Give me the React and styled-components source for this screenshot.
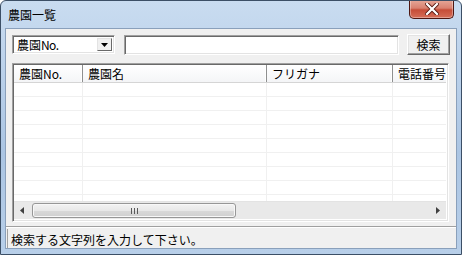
import styled, { createGlobalStyle } from 'styled-components'

const Global = createGlobalStyle`
  html, body { margin: 0; padding: 0; background: #ffffff; }
  body { font-family: "MS UI Gothic", "Noto Sans CJK JP", sans-serif; font-size: 12px; }
`

const columns = [
  { title: '農園No.', width: 69 },
  { title: '農園名', width: 184 },
  { title: 'フリガナ', width: 126 },
  { title: '電話番号', width: 80 }
]

function CloseGlyph () {
  return (
    <svg width='14' height='12' viewBox='0 0 14 12'>
      <path d='M2 1 L12 11 M12 1 L2 11' stroke='#5a1a12' strokeWidth='4' strokeLinecap='square' />
      <path d='M2 1 L12 11 M12 1 L2 11' stroke='#ffffff' strokeWidth='2.2' strokeLinecap='square' />
    </svg>
  )
}

function Arrow ({ dir }) {
  return (
    <svg width='5' height='7' viewBox='0 0 5 7'>
      {dir === 'left'
        ? <path d='M4 0 L0 3.5 L4 7 Z' fill='#404040' />
        : <path d='M1 0 L5 3.5 L1 7 Z' fill='#404040' />}
    </svg>
  )
}

function GripLines () {
  return (
    <svg width='7' height='6' viewBox='0 0 7 6'>
      <path d='M0.5 0 V6 M3.5 0 V6 M6.5 0 V6' stroke='#5a5a5a' strokeWidth='1' />
    </svg>
  )
}

function App () {
  const rows = Array.from({ length: 9 })
  return (
    <>
      <Global />
      <Window>
        <TitleBar>
          <Title>農園一覧</Title>
          <CloseButton><CloseGlyph /></CloseButton>
        </TitleBar>
        <Client>
          <Toolbar>
            <Combo>
              <ComboText>農園<Narrow>No.</Narrow></ComboText>
              <ComboButton>
                <svg width='7' height='4' viewBox='0 0 7 4'><path d='M0 0 H7 L3.5 4 Z' fill='#000' /></svg>
              </ComboButton>
            </Combo>
            <SearchInput />
            <Button>検索</Button>
          </Toolbar>
          <ListView>
            <Header>
              {columns.map(c => (
                <HeaderCell key={c.title} $w={c.width}>{c.title}</HeaderCell>
              ))}
            </Header>
            <Body>
              {rows.map((_, i) => (
                <Row key={i}>
                  {columns.map(c => <Cell key={c.title} $w={c.width} />)}
                </Row>
              ))}
            </Body>
            <HScroll>
              <ScrollArrow><Arrow dir='left' /></ScrollArrow>
              <Track>
                <Thumb>
                  <GripLines />
                </Thumb>
              </Track>
              <ScrollArrow><Arrow dir='right' /></ScrollArrow>
            </HScroll>
          </ListView>
          <StatusBar>
            <StatusPanel>検索する文字列を入力して下さい。</StatusPanel>
          </StatusBar>
        </Client>
      </Window>
    </>
  )
}

const Window = styled.div`
  width: 462px;
  height: 255px;
  box-sizing: border-box;
  border: 1px solid #3c4f66;
  border-radius: 6px 6px 0 0;
  background: linear-gradient(180deg, #c9dcf0 0%, #bfd4ec 20%, #abc5e3 60%, #b8cfe9 100%);
  padding: 0 4px 5px 4px;
  display: flex;
  flex-direction: column;
  overflow: hidden;
`

const TitleBar = styled.div`
  height: 27px;
  display: flex;
  align-items: flex-start;
  justify-content: space-between;
  flex-shrink: 0;
`

const Title = styled.div`
  font-size: 12px;
  color: #000;
  padding: 5px 0 0 3px;
`

const CloseButton = styled.div`
  width: 45px;
  height: 19px;
  margin-right: 3px;
  margin-top: -1px;
  box-sizing: border-box;
  border: 1px solid #4e1712;
  border-top: none;
  border-radius: 0 0 5px 5px;
  background: linear-gradient(180deg, #e6a899 0%, #d98170 45%, #c64d38 55%, #d56e58 100%);
  box-shadow: inset 0 0 0 1px rgba(255, 255, 255, 0.35);
  display: flex;
  align-items: center;
  justify-content: center;
`

const Client = styled.div`
  flex: 1;
  background: #f0f0f0;
  border: 1px solid #8aa0bb;
  display: flex;
  flex-direction: column;
  min-height: 0;
`

const Toolbar = styled.div`
  display: flex;
  align-items: center;
  padding: 5px 0 0 6px;
  height: 21px;
`

const Combo = styled.div`
  width: 103px;
  height: 19px;
  box-sizing: border-box;
  background: #fff;
  border-top: 1px solid #a0a0a0;
  border-left: 1px solid #a0a0a0;
  border-right: 1px solid #fff;
  border-bottom: 1px solid #fff;
  box-shadow: inset 1px 1px 0 #696969, inset -1px -1px 0 #e3e3e3;
  display: flex;
  align-items: center;
  justify-content: space-between;
  padding: 2px;
`

const ComboText = styled.span`
  padding-left: 2px;
  line-height: 13px;
`

const Narrow = styled.span`
  letter-spacing: -0.6px;
`

const ComboButton = styled.div`
  width: 15px;
  height: 13px;
  box-sizing: border-box;
  background: #f0f0f0;
  border-top: 1px solid #e3e3e3;
  border-left: 1px solid #e3e3e3;
  border-right: 1px solid #696969;
  border-bottom: 1px solid #696969;
  display: flex;
  align-items: center;
  justify-content: center;
`

const SearchInput = styled.div`
  width: 275px;
  height: 20px;
  box-sizing: border-box;
  margin-left: 9px;
  background: #fff;
  border-top: 1px solid #a0a0a0;
  border-left: 1px solid #a0a0a0;
  border-right: 1px solid #fff;
  border-bottom: 1px solid #fff;
  box-shadow: inset 1px 1px 0 #696969, inset -1px -1px 0 #e3e3e3;
`

const Button = styled.div`
  width: 43px;
  height: 21px;
  box-sizing: border-box;
  margin-left: 8px;
  background: #f0f0f0;
  border-top: 1px solid #fff;
  border-left: 1px solid #fff;
  border-right: 1px solid #696969;
  border-bottom: 1px solid #696969;
  box-shadow: inset -1px -1px 0 #a0a0a0, inset 1px 1px 0 #e3e3e3;
  display: flex;
  align-items: center;
  justify-content: center;
  font-size: 12px;
`

const ListView = styled.div`
  margin: 8px 0 0 6px;
  width: 437px;
  height: 161px;
  box-sizing: border-box;
  background: #fff;
  border-top: 1px solid #a0a0a0;
  border-left: 1px solid #a0a0a0;
  border-right: 1px solid #fff;
  border-bottom: 1px solid #fff;
  box-shadow: inset 1px 1px 0 #696969, inset -1px -1px 0 #e3e3e3;
  padding: 1px 2px 2px 1px;
  display: flex;
  flex-direction: column;
  overflow: hidden;
`

const Header = styled.div`
  display: flex;
  height: 17px;
  flex-shrink: 0;
  background: linear-gradient(180deg, #ffffff 0%, #f4f5f7 100%);
  border-bottom: 1px solid #d5d5d5;
  white-space: nowrap;
`

const HeaderCell = styled.div`
  width: ${p => p.$w}px;
  flex-shrink: 0;
  box-sizing: border-box;
  padding: 2px 0 0 5px;
  border-right: 1px solid #8e8f8f;
  box-shadow: inset -1px 0 0 #ffffff;
  line-height: 13px;
  overflow: hidden;
`

const Body = styled.div`
  flex: 1;
  overflow: hidden;
`

const Row = styled.div`
  display: flex;
  height: 13px;
  border-bottom: 1px solid #f0f0f0;
`

const Cell = styled.div`
  width: ${p => p.$w}px;
  flex-shrink: 0;
  box-sizing: border-box;
  border-right: 1px solid #f0f0f0;
`

const HScroll = styled.div`
  height: 17px;
  flex-shrink: 0;
  display: flex;
  align-items: stretch;
  background: #e9e9e9;
  border-top: 1px solid #e3e3e3;
`

const ScrollArrow = styled.div`
  width: 17px;
  display: flex;
  align-items: center;
  justify-content: center;
`

const Track = styled.div`
  flex: 1;
  display: flex;
  align-items: center;
  padding: 0 1px;
`

const Thumb = styled.div`
  width: 204px;
  height: 15px;
  box-sizing: border-box;
  border: 1px solid #979797;
  border-radius: 3px;
  background: linear-gradient(180deg, #f3f3f3 0%, #e8e8e8 50%, #d9d9d9 51%, #d0d0d0 100%);
  box-shadow: inset 0 0 0 1px #f8f8f8;
  display: flex;
  align-items: center;
  justify-content: center;
`

const StatusBar = styled.div`
  margin-top: 4px;
  flex: 1;
  display: flex;
  border-top: 1px solid #a0a0a0;
  box-shadow: inset 0 1px 0 #ffffff;
  padding: 2px 0 0 1px;
`

const StatusPanel = styled.div`
  flex: 1;
  padding: 2px 0 0 3px;
  border-left: 1px solid #a0a0a0;
  font-size: 12px;
  color: #000;
  white-space: nowrap;
`

export default App
